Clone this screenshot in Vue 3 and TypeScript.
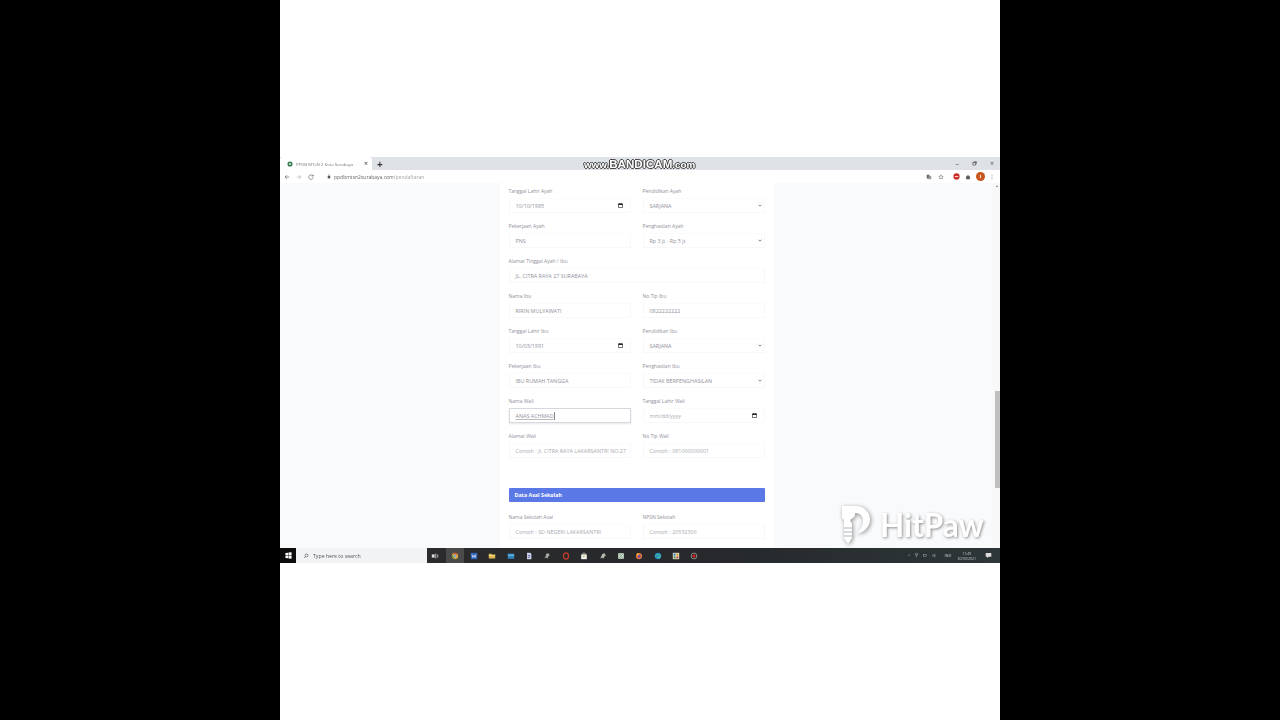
<script setup lang="ts">
interface Field {
  label: string
  value?: string
  placeholder?: string
  type?: 'text' | 'date' | 'select'
  wide?: boolean
  active?: boolean
}

const parentFields: Field[] = [
  { label: 'Tanggal Lahir Ayah', value: '10/10/1985', type: 'date' },
  { label: 'Pendidikan Ayah', value: 'SARJANA', type: 'select' },
  { label: 'Pekerjaan Ayah', value: 'PNS' },
  { label: 'Penghasilan Ayah', value: 'Rp 3 jt - Rp 5 jt', type: 'select' },
  { label: 'Alamat Tinggal Ayah / Ibu', value: 'JL. CITRA RAYA 27 SURABAYA', wide: true },
  { label: 'Nama Ibu', value: 'RIRIN MULYAWATI' },
  { label: 'No Tlp Ibu', value: '0822222222' },
  { label: 'Tanggal Lahir Ibu', value: '10/03/1991', type: 'date' },
  { label: 'Pendidikan Ibu', value: 'SARJANA', type: 'select' },
  { label: 'Pekerjaan Ibu', value: 'IBU RUMAH TANGGA' },
  { label: 'Penghasilan Ibu', value: 'TIDAK BERPENGHASILAN', type: 'select' },
  { label: 'Nama Wali', value: 'ANAS ACHMAD', active: true },
  { label: 'Tanggal Lahir Wali', placeholder: 'mm/dd/yyyy', type: 'date' },
  { label: 'Alamat Wali', placeholder: 'Contoh : Jl. CITRA RAYA LAKARSANTRI NO.27' },
  { label: 'No Tlp Wali', placeholder: 'Contoh : 081000000001' },
]

const schoolFields: Field[] = [
  { label: 'Nama Sekolah Asal', placeholder: 'Contoh : SD NEGERI LAKARSANTRI' },
  { label: 'NPSN Sekolah', placeholder: 'Contoh : 20532306' },
]
</script>

<template>
  <div class="stage">
    <div class="screen">
      <div class="browser">
        <div class="tabstrip">
          <div class="tab">
            <svg class="favicon" viewBox="0 0 8 8"><circle cx="4" cy="4" r="3.4" fill="#2f7d4f" /><circle cx="4" cy="4" r="1.3" fill="#e8efe4" /></svg>
            <span class="tab-title">PPDB MTsN 2 Kota Surabaya</span>
            <span class="tab-close">×</span>
          </div>
          <span class="new-tab">+</span>
          <div class="window-controls">
            <span>–</span>
            <svg viewBox="0 0 8 8"><rect x="1.5" y="2.5" width="4" height="4" fill="none" stroke="#444" /><path d="M3 1h4v4" fill="none" stroke="#444" /></svg>
            <span>×</span>
          </div>
        </div>

        <div class="toolbar">
          <svg class="nav" viewBox="0 0 8 8"><path d="M7 4H1.5M4 1.5 1.5 4 4 6.5" fill="none" stroke="#555" stroke-width=".8" /></svg>
          <svg class="nav" viewBox="0 0 8 8"><path d="M1 4h5.5M4 1.5 6.5 4 4 6.5" fill="none" stroke="#aaa" stroke-width=".8" /></svg>
          <svg class="nav" viewBox="0 0 8 8"><path d="M6.500 2.500A3 3 0 1 0 7 4.500M7 .8v2H5" fill="none" stroke="#555" stroke-width=".8" /></svg>
          <div class="omnibox">
            <svg class="lock" viewBox="0 0 6 8"><rect x="1" y="3" width="4" height="4" fill="#555" /><path d="M2 3V2a1 1 0 0 1 2 0v1" fill="none" stroke="#555" stroke-width=".6" /></svg>
            <span class="url">ppdbmtsn2surabaya.com<span class="url-path">/pendaftaran</span></span>
          </div>
          <div class="extensions">
            <svg viewBox="0 0 8 8"><rect x="1" y="1" width="3.500" height="5" fill="#666" /><rect x="3.500" y="2.500" width="3.500" height="4.500" fill="#9a9a9a" /></svg>
            <svg viewBox="0 0 8 8"><path d="m4 1 .9 2 2.100.2-1.600 1.400.5 2.100L4 5.600 2.100 6.700l.5-2.100L1 3.200 3.100 3z" fill="none" stroke="#555" stroke-width=".6" /></svg>
            <svg class="ext-red" viewBox="0 0 8 8"><circle cx="4" cy="4" r="3.600" fill="#c9302a" /><rect x="2" y="3.400" width="4" height="1.200" fill="#f5d5d3" /></svg>
            <svg viewBox="0 0 8 8"><path d="M1.500 3H3V1.500h2V3h1.500v4h-5z" fill="#555" /></svg>
            <svg class="avatar" viewBox="0 0 8 8"><circle cx="4" cy="4" r="4" fill="#c9551c" /><rect x="3.500" y="2.500" width="1" height="3" fill="#f6dccb" /></svg>
            <svg viewBox="0 0 8 8"><circle cx="4" cy="1.600" r=".6" fill="#555" /><circle cx="4" cy="4" r=".6" fill="#555" /><circle cx="4" cy="6.400" r=".6" fill="#555" /></svg>
          </div>
        </div>

        <div class="viewport">
          <main class="page">
            <div class="card">
              <div class="form-grid">
                <div v-for="f in parentFields" :key="f.label" class="field" :class="{ wide: f.wide }">
                  <label>{{ f.label }}</label>
                  <div class="input" :class="{ active: f.active, placeholder: f.placeholder }">
                    <span class="value">{{ f.value ?? f.placeholder }}</span>
                    <svg v-if="f.type === 'date'" class="calendar" viewBox="0 0 6 6"><path d="M.5 1h5v4.500h-5z" fill="none" stroke="#222" stroke-width=".8" /><path d="M.5 1h5v1.400h-5zM1.500 0h.7v1h-.7zM3.800 0h.7v1h-.7z" fill="#222" /></svg>
                    <svg v-if="f.type === 'select'" class="chevron" viewBox="0 0 6 4"><path d="M.8.8 3 3l2.200-2.200" fill="none" stroke="#444" stroke-width="1" /></svg>
                  </div>
                </div>
              </div>

              <div class="section-title">Data Asal Sekolah</div>

              <div class="form-grid">
                <div v-for="f in schoolFields" :key="f.label" class="field">
                  <label>{{ f.label }}</label>
                  <div class="input placeholder"><span class="value">{{ f.placeholder }}</span></div>
                </div>
              </div>
            </div>
          </main>
          <div class="scrollbar">
            <span class="scroll-up"></span>
            <span class="scroll-thumb"></span>
          </div>
        </div>

        <div class="taskbar">
          <div class="start">
            <svg viewBox="0 0 8 8"><path d="M.5 1.200 3.500.8v3H.5zM4 .7 7.500.2v3.600H4zM.5 4.200h3v3l-3-.4zM4 4.200h3.500v3.600L4 7.300z" fill="#fff" /></svg>
          </div>
          <div class="search">
            <svg viewBox="0 0 8 8"><circle cx="4.800" cy="3.200" r="2" fill="none" stroke="#333" stroke-width=".7" /><path d="M3.400 4.600 1.200 6.800" stroke="#333" stroke-width=".7" /></svg>
            <span>Type here to search</span>
          </div>
          <div class="apps">
            <svg viewBox="0 0 10 10"><rect x="1" y="3" width="3.500" height="4" fill="#ddd" /><rect x="5.500" y="2" width="1" height="6" fill="#ddd" /><rect x="7.500" y="3" width="1.500" height="4" fill="#999" /></svg>
            <span class="app-on">
              <svg viewBox="0 0 10 10"><circle cx="5" cy="5" r="4" fill="#d8a02c" /><path d="M5 1a4 4 0 0 1 3.500 2H5L2.800 3A4 4 0 0 1 5 1" fill="#c9452f" /><path d="M1.500 3.400 3.600 7 5 9A4 4 0 0 1 1.500 3.400" fill="#4c9a52" /><circle cx="5" cy="5" r="1.700" fill="#5b8fd0" stroke="#eee" stroke-width=".5" /></svg>
            </span>
            <svg viewBox="0 0 10 10"><rect x="1" y="1" width="8" height="8" fill="#2f63b8" /><path d="M2.500 3 3.600 7 5 4l1.400 3 1.100-4" fill="none" stroke="#fff" stroke-width=".8" /></svg>
            <svg viewBox="0 0 10 10"><path d="M1 2.200h3.200L5 3.200h4v5H1z" fill="#e2b94f" /><rect x="1" y="4" width="8" height="1" fill="#f4dd90" /></svg>
            <svg viewBox="0 0 10 10"><rect x="1" y="2" width="8" height="6.500" fill="#2f86c0" /><path d="M1 4h8" stroke="#9dd2ee" stroke-width="1" /></svg>
            <svg viewBox="0 0 10 10"><path d="M2.500 1h4L8 2.500V9H2.500z" fill="#cdd3ea" /><rect x="3.500" y="4" width="3" height="1" fill="#5a5fa8" /><rect x="3.500" y="6" width="3" height="1" fill="#5a5fa8" /></svg>
            <svg viewBox="0 0 10 10"><path d="M1.500 8 4 4.500 3.500 2.500 6.500 1.500 8.500 4 6 6 6.500 8 3.500 7z" fill="#a9b0a8" /></svg>
            <svg viewBox="0 0 10 10"><ellipse cx="5" cy="5" rx="3.200" ry="4" fill="none" stroke="#c63a2a" stroke-width="1.600" /></svg>
            <svg viewBox="0 0 10 10"><rect x="1.500" y="3" width="7" height="6" fill="#f1f1e8" /><path d="M3.500 3V1.500h3V3" fill="none" stroke="#e9e9df" stroke-width=".7" /><rect x="4" y="5" width="1" height="1" fill="#4b8f4b" /><rect x="5.200" y="5" width="1" height="1" fill="#d8a02c" /></svg>
            <svg viewBox="0 0 10 10"><path d="M1.500 8 3.500 4 4 2.500 7 1.500 8.500 4.500 6 6.500 6.500 8 3.500 7.200z" fill="#b3b8ae" /></svg>
            <svg viewBox="0 0 10 10"><rect x="1.500" y="1.500" width="7" height="7" fill="#cfe0cf" /><path d="M3 7 7 3M3 3.500h2M5.500 7H7" stroke="#3f7a54" stroke-width=".8" /></svg>
            <svg viewBox="0 0 10 10"><circle cx="5" cy="5.200" r="3.800" fill="#e9792b" /><circle cx="5.300" cy="5.500" r="2" fill="#7c4bb0" /><path d="M2 3 3 1c.2 1 1 1.400 2 1.500L3.500 4z" fill="#f5c542" /></svg>
            <svg viewBox="0 0 10 10"><circle cx="5" cy="5" r="4" fill="#1f86c8" /><path d="M1.500 6C2 3 6 2 8 4c.8 1 .5 2-.8 2H4c0 1.500 2 2 3.500 1.300" fill="none" stroke="#5fd18d" stroke-width="1" /></svg>
            <svg viewBox="0 0 10 10"><rect x="1" y="1" width="8" height="8" fill="#e9e4cf" /><rect x="2" y="2" width="2.500" height="2.500" fill="#3f78b8" /><rect x="5.500" y="2" width="2.500" height="2.500" fill="#cda32c" /><rect x="2" y="5.500" width="2.500" height="2.500" fill="#4b8f4b" /><rect x="5.500" y="5.500" width="2.500" height="2.500" fill="#b8483f" /></svg>
            <svg viewBox="0 0 10 10"><circle cx="5" cy="5" r="3.600" fill="#222" stroke="#ddd" stroke-width=".7" /><circle cx="5" cy="5" r="2" fill="#d4242b" /></svg>
          </div>
          <div class="tray">
            <span>^</span>
            <svg viewBox="0 0 6 8"><path d="M1 1h4v2.500H1zM3 3.500V7" fill="none" stroke="#ccc" stroke-width=".6" /></svg>
            <svg viewBox="0 0 8 6"><rect x=".5" y="1" width="5" height="4" fill="none" stroke="#ccc" stroke-width=".6" /></svg>
            <svg viewBox="0 0 8 6"><path d="M1 2h1.500L4 .8v4.400L2.500 4H1zM5.500 1.500c.8.8.8 2.200 0 3" fill="none" stroke="#ccc" stroke-width=".6" /></svg>
            <span class="lang">IND</span>
            <div class="clock"><span>11:49</span><span>30/03/2021</span></div>
            <svg class="notify" viewBox="0 0 8 8"><path d="M.8 1h6.400v4.500H4L2.500 7V5.500H.8z" fill="#ddd" /></svg>
          </div>
        </div>

        <div class="bandicam"><small>www.</small>BANDICAM<small>.com</small></div>
        <div class="hitpaw">
          <svg viewBox="0 0 34 42">
            <path d="M3 2h14c8 0 14 6 14 13.500S25 29 18 29c2-2 6-6 6-12 0-5-3-8-8-8 1 3-2 5-5 7l2 4v14l-4 6-4-6V16L3 14z" fill="#fff" />
            <path d="M5 24h8M5 28h8M5 32h8" stroke="#c9cbcd" stroke-width="1.300" />
          </svg>
          <span>HitPaw</span>
        </div>
      </div>
    </div>
  </div>
</template>

<style>
body {
  margin: 0;
  background: #000;
}
</style>

<style scoped>
.stage {
  display: flex;
  justify-content: center;
  height: 720px;
  overflow: hidden;
  background: #000;
  font-family: "Open Sans", "Liberation Sans", sans-serif;
}

.screen {
  width: 720px;
  height: 720px;
  padding-top: 157px;
  box-sizing: border-box;
  background: #fff;
}

.browser {
  position: relative;
  display: flex;
  flex-direction: column;
  height: 406px;
  overflow: hidden;
  filter: blur(0.7px);
}

.tabstrip {
  display: flex;
  align-items: center;
  flex: 0 0 13px;
  background: #dee1e6;
}

.tab {
  display: flex;
  align-items: center;
  box-sizing: border-box;
  width: 92px;
  height: 13px;
  padding: 0 4px 0 7px;
  background: #fff;
  border-radius: 3px 3px 0 0;
}

.favicon {
  width: 6px;
  height: 6px;
  margin-right: 3px;
}

.tab-title {
  flex: 1;
  font-size: 4.300px;
  color: #777;
  white-space: nowrap;
}

.tab-close {
  font-size: 7px;
  line-height: 7px;
  color: #333;
}

.new-tab {
  margin-left: 5px;
  font-size: 10px;
  font-weight: 700;
  line-height: 10px;
  color: #333;
}

.window-controls {
  display: flex;
  align-items: center;
  gap: 13px;
  margin-left: auto;
  padding-right: 6px;
  font-size: 7px;
  color: #555;
}

.window-controls svg {
  width: 5px;
  height: 5px;
}

.toolbar {
  display: flex;
  align-items: center;
  flex: 0 0 13px;
  padding-left: 4px;
  background: #fff;
}

.nav {
  width: 6px;
  height: 6px;
  margin-right: 6px;
}

.omnibox {
  display: flex;
  align-items: center;
  gap: 3px;
  margin-left: 7px;
}

.lock {
  width: 4px;
  height: 5px;
}

.url {
  font-size: 5px;
  color: #666;
  white-space: nowrap;
}

.url-path {
  color: #a5a5a5;
}

.extensions {
  display: flex;
  align-items: center;
  gap: 6px;
  margin-left: auto;
  padding-right: 5px;
}

.extensions svg {
  width: 6px;
  height: 6px;
}

.extensions .ext-red {
  width: 7px;
  height: 7px;
  margin-left: 2.500px;
  margin-right: -.5px;
}

.extensions .avatar {
  width: 9px;
  height: 9px;
  margin: 0 -1.500px;
}

.viewport {
  display: flex;
  flex: 1;
  min-height: 0;
  background: #f8fafb;
}

.page {
  display: flex;
  justify-content: center;
  flex: 1;
  min-width: 0;
  overflow: hidden;
}

.card {
  box-sizing: border-box;
  width: 274px;
  padding: 3px 9px 0;
  background: #fff;
}

.form-grid {
  display: grid;
  grid-template-columns: 122px 122px;
  gap: 8px 12px;
}

.field.wide {
  grid-column: 1 / -1;
}

label {
  display: block;
  height: 10px;
  margin-bottom: 2px;
  font-size: 5px;
  line-height: 10px;
  color: #8f919b;
  white-space: nowrap;
}

.input {
  display: flex;
  align-items: center;
  justify-content: space-between;
  box-sizing: border-box;
  height: 15px;
  padding: 0 6px;
  background: #fff;
  border: 1px solid #f7f8f9;
  border-top-color: #fbfbfc;
  font-size: 5.400px;
  color: #8f919b;
  white-space: nowrap;
}

.input.active {
  border-color: #d6d8dd;
  box-shadow: 0 1px 2px #e6e7ea;
}

.input.active .value {
  border-right: 1px solid #888;
  text-decoration: underline #bbb;
}

.input.placeholder .value {
  color: #a9abb3;
}

.calendar {
  width: 5px;
  height: 5px;
  margin-right: 1px;
}

.chevron {
  width: 4px;
  height: 3px;
  margin-right: -4px;
}

.section-title {
  display: flex;
  align-items: center;
  height: 14px;
  margin: 30px 0 10px;
  padding: 0 0 1px 6px;
  box-sizing: border-box;
  background: #5a79e6;
  border-radius: 1px;
  font-size: 5.300px;
  font-weight: 700;
  color: #fff;
}

.scrollbar {
  display: flex;
  flex-direction: column;
  flex: 0 0 7px;
  background: #f8f8f8;
}

.scroll-up {
  width: 0;
  height: 0;
  margin: 2px auto 0;
  border: 1.500px solid transparent;
  border-top: 0;
  border-bottom: 2px solid #777;
}

.scroll-thumb {
  height: 97px;
  margin: 204px 0 0 2px;
  background: #c0c0c0;
}

.taskbar {
  display: flex;
  align-items: center;
  flex: 0 0 15px;
  background: linear-gradient(90deg, #4a2a30 0, #2b2b2d 20%, #26282b 60%, #2d3638 100%);
}

.start {
  display: flex;
  align-items: center;
  justify-content: center;
  width: 16px;
  height: 15px;
  background: #0c0c0c;
}

.start svg {
  width: 7px;
  height: 7px;
}

.search {
  display: flex;
  align-items: center;
  gap: 4px;
  box-sizing: border-box;
  width: 131px;
  height: 15px;
  padding-left: 7px;
  background: #f2f3f4;
  font-size: 5.200px;
  color: #555;
}

.search svg {
  width: 6px;
  height: 6px;
}

.apps {
  display: flex;
  align-items: center;
  gap: 10.400px;
  padding-left: 4px;
}

.apps > svg {
  width: 8px;
  height: 8px;
}

.app-on {
  display: flex;
  align-items: center;
  justify-content: center;
  width: 18px;
  height: 15px;
  margin: 0 -5px 0 -3px;
  background: #4a4a4a;
}

.app-on svg {
  width: 8px;
  height: 8px;
}

.tray {
  display: flex;
  align-items: center;
  gap: 4px;
  margin-left: auto;
  padding-right: 8px;
  font-size: 4px;
  color: #ccc;
}

.tray svg {
  width: 5px;
  height: 5px;
}

.tray .lang {
  margin: 0 2px 0 3px;
}

.tray .notify {
  width: 7px;
  height: 7px;
  margin-left: 5px;
}

.clock {
  display: flex;
  flex-direction: column;
  align-items: center;
  font-size: 3.500px;
  line-height: 5px;
}

.bandicam {
  position: absolute;
  top: 1px;
  left: 304px;
  font-family: "Liberation Sans", sans-serif;
  font-size: 11.600px;
  font-weight: 700;
  line-height: 12px;
  color: #fff;
  white-space: nowrap;
  text-shadow: -1px 0 #444, 1px 0 #444, 0 -1px #444, 0 1px #444;
}

.bandicam small {
  font-size: 9.800px;
}

.hitpaw {
  position: absolute;
  top: 347px;
  left: 559px;
  display: flex;
  align-items: center;
  gap: 7px;
  font-family: Lato, sans-serif;
  font-size: 31.500px;
  font-weight: 700;
  line-height: 42px;
  color: #fff;
  text-shadow: 1px 1px 3px #8d8d8d;
}

.hitpaw svg {
  width: 34px;
  height: 42px;
  filter: drop-shadow(1px 1px 2px #8d8d8d);
}
</style>
